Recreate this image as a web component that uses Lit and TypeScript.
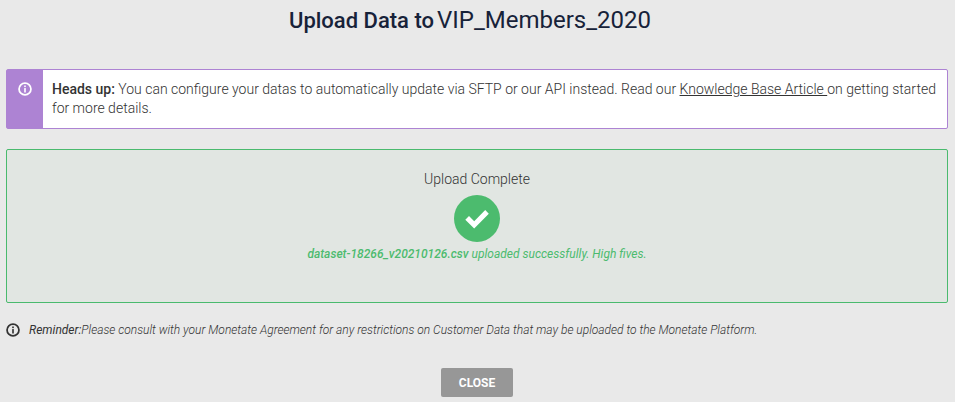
import { LitElement, html, css, svg } from "lit";
import { customElement } from "lit/decorators.js";

const infoIcon = html`<svg class="info" viewBox="0 0 24 24" aria-hidden="true">
  ${svg`<circle cx="12" cy="12" r="10.2" fill="none" stroke="currentColor" stroke-width="3"></circle>
  <rect x="10.6" y="6" width="2.8" height="2.8" fill="currentColor"></rect>
  <rect x="10.6" y="10.4" width="2.8" height="7.6" fill="currentColor"></rect>`}
</svg>`;

@customElement("app-root")
export class AppRoot extends LitElement {
  static styles = css`
    :host {
      display: block;
      box-sizing: border-box;
      min-height: 100vh;
      padding: 5px 7px 5px 6px;
      background: #e9e9e9;
      color: #333;
      font: 300 14px/19px Roboto, "Liberation Sans", sans-serif;
    }
    h1, h2, p { margin: 0; }
    h1 {
      display: flex;
      justify-content: center;
      align-items: baseline;
      gap: 3px;
      padding-right: 14px;
      color: #172239;
      font-size: 22px;
      line-height: 32px;
      font-weight: 500;
    }
    .name { font-size: 24px; line-height: 28px; font-weight: 400; }
    .notice {
      display: flex;
      margin-top: 32px;
      border: 1px solid #ad83d3;
      border-radius: 2px;
      background: #fff;
    }
    .tab {
      flex: none;
      display: flex;
      justify-content: center;
      box-sizing: border-box;
      width: 36px;
      padding-top: 12px;
      background: #ad83d3;
      color: #fff;
    }
    .info { flex: none; display: block; width: 14px; height: 14px; overflow: visible; }
    .notice p { padding: 10px 0 10px 9px; }
    b { font-weight: 500; }
    a { color: inherit; text-decoration: underline; }
    .result {
      display: flex;
      flex-direction: column;
      align-items: center;
      box-sizing: border-box;
      min-height: 154px;
      margin-top: 20px;
      padding-top: 20px;
      border: 1px solid #4aba6e;
      border-radius: 2px;
      background: #e1e6e2;
    }
    h2 { font-size: 14px; line-height: 19px; font-weight: 300; }
    .check { display: block; width: 46px; height: 47px; margin: 6px 0 4px; }
    .done { color: #4cbb6e; font-size: 12px; line-height: 16px; font-style: italic; font-weight: 400; }
    .done b { font-weight: 500; }
    .reminder {
      display: flex;
      align-items: center;
      gap: 9px;
      margin-top: 19px;
      font-size: 12px;
      line-height: 16px;
      font-style: italic;
    }
    .reminder b { font-weight: 400; }
    .actions { display: flex; justify-content: center; margin-top: 30px; }
    button {
      height: 29px;
      padding: 0 18px;
      border: 0;
      border-radius: 2px;
      background: #979797;
      color: #fff;
      font: 700 12px/16px Roboto, "Liberation Sans", sans-serif;
    }
  `;

  render() {
    return html`
      <h1><span>Upload Data to</span><span class="name">VIP_Members_2020</span></h1>
      <section class="notice">
        <div class="tab">${infoIcon}</div>
        <p><b>Heads up:</b> You can configure your datas to automatically update via SFTP or our API instead. Read our <a href="#">Knowledge Base Article </a>on getting started for more details.</p>
      </section>
      <section class="result">
        <h2>Upload Complete</h2>
        <svg class="check" viewBox="0 0 46 47" aria-hidden="true">
          <ellipse cx="23" cy="23.5" rx="23" ry="23.5" fill="#4cbb6e"></ellipse>
          <path d="M11.3 24.8 15 21l5.2 5.2L31.2 15l3.6 3.8L20.2 33.6z" fill="#fff"></path>
        </svg>
        <p class="done"><b>dataset-18266_v20210126.csv</b> uploaded successfully. High fives.</p>
      </section>
      <div class="reminder">
        ${infoIcon}
        <p><b>Reminder:</b>Please consult with your Monetate Agreement for any restrictions on Customer Data that may be uploaded to the Monetate Platform.</p>
      </div>
      <div class="actions"><button type="button">CLOSE</button></div>
    `;
  }
}
